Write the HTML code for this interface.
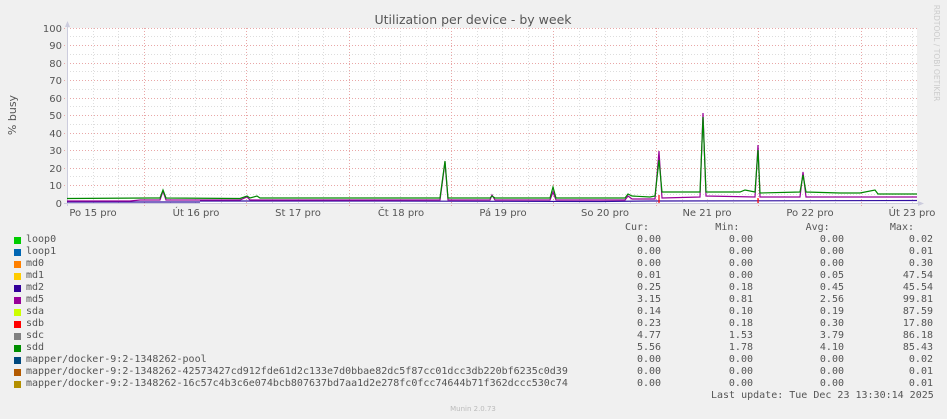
<!DOCTYPE html>
<html><head><meta charset="utf-8"><style>
html,body{margin:0;padding:0;background:#f0f0f0;}
body{width:947px;height:419px;position:relative;overflow:hidden;font-family:"DejaVu Sans","Liberation Sans",sans-serif;}
.t{position:absolute;white-space:pre;}
.m{font-family:"DejaVu Sans Mono","Liberation Mono",monospace;font-size:10px;color:#555;line-height:12px;}
.sw{position:absolute;width:7px;height:7px;left:14px;}
</style></head><body>
<svg width="947" height="419" style="position:absolute;left:0;top:0">
<rect x="67" y="28" width="850" height="175" fill="#fff"/>
<g stroke="#ddd" stroke-width="1" stroke-dasharray="1,2">
<line x1="67" x2="917" y1="36.5" y2="36.5"/><line x1="67" x2="917" y1="54.5" y2="54.5"/><line x1="67" x2="917" y1="71.5" y2="71.5"/><line x1="67" x2="917" y1="89.5" y2="89.5"/><line x1="67" x2="917" y1="106.5" y2="106.5"/><line x1="67" x2="917" y1="124.5" y2="124.5"/><line x1="67" x2="917" y1="141.5" y2="141.5"/><line x1="67" x2="917" y1="159.5" y2="159.5"/><line x1="67" x2="917" y1="176.5" y2="176.5"/><line x1="67" x2="917" y1="194.5" y2="194.5"/>
<line y1="28" y2="203" x1="93.5" x2="93.5"/><line y1="28" y2="203" x1="118.5" x2="118.5"/><line y1="28" y2="203" x1="170.5" x2="170.5"/><line y1="28" y2="203" x1="195.5" x2="195.5"/><line y1="28" y2="203" x1="221.5" x2="221.5"/><line y1="28" y2="203" x1="272.5" x2="272.5"/><line y1="28" y2="203" x1="298.5" x2="298.5"/><line y1="28" y2="203" x1="323.5" x2="323.5"/><line y1="28" y2="203" x1="374.5" x2="374.5"/><line y1="28" y2="203" x1="400.5" x2="400.5"/><line y1="28" y2="203" x1="426.5" x2="426.5"/><line y1="28" y2="203" x1="477.5" x2="477.5"/><line y1="28" y2="203" x1="502.5" x2="502.5"/><line y1="28" y2="203" x1="528.5" x2="528.5"/><line y1="28" y2="203" x1="579.5" x2="579.5"/><line y1="28" y2="203" x1="605.5" x2="605.5"/><line y1="28" y2="203" x1="630.5" x2="630.5"/><line y1="28" y2="203" x1="682.5" x2="682.5"/><line y1="28" y2="203" x1="707.5" x2="707.5"/><line y1="28" y2="203" x1="733.5" x2="733.5"/><line y1="28" y2="203" x1="784.5" x2="784.5"/><line y1="28" y2="203" x1="810.5" x2="810.5"/><line y1="28" y2="203" x1="835.5" x2="835.5"/><line y1="28" y2="203" x1="886.5" x2="886.5"/><line y1="28" y2="203" x1="912.5" x2="912.5"/>
</g>
<g stroke="#e9a7a7" stroke-width="1" stroke-dasharray="1,2">
<line x1="64" x2="917" y1="28.5" y2="28.5"/><line x1="64" x2="917" y1="45.5" y2="45.5"/><line x1="64" x2="917" y1="63.5" y2="63.5"/><line x1="64" x2="917" y1="80.5" y2="80.5"/><line x1="64" x2="917" y1="98.5" y2="98.5"/><line x1="64" x2="917" y1="115.5" y2="115.5"/><line x1="64" x2="917" y1="133.5" y2="133.5"/><line x1="64" x2="917" y1="150.5" y2="150.5"/><line x1="64" x2="917" y1="168.5" y2="168.5"/><line x1="64" x2="917" y1="185.5" y2="185.5"/>
<line y1="28" y2="206" x1="144.5" x2="144.5"/><line y1="28" y2="206" x1="246.5" x2="246.5"/><line y1="28" y2="206" x1="349.5" x2="349.5"/><line y1="28" y2="206" x1="451.5" x2="451.5"/><line y1="28" y2="206" x1="553.5" x2="553.5"/><line y1="28" y2="206" x1="656.5" x2="656.5"/><line y1="28" y2="206" x1="758.5" x2="758.5"/><line y1="28" y2="206" x1="861.5" x2="861.5"/>
</g>
<line x1="67.5" y1="22" x2="67.5" y2="206" stroke="#ccd" stroke-width="1"/>
<polygon points="65,27 67.5,21 70,27" fill="#ccd"/>
<line x1="64" y1="203.5" x2="922" y2="203.5" stroke="#ccd"/>
<polygon points="918,201 924,203.5 918,206" fill="#ccd"/>
<g fill="none" stroke-width="1.2">
<path stroke="#3010a0" d="M67 202 L200 202 M200 201 L340 201 L600 201.5 L650 201 L917 200.5"/>
<path stroke="#990099" d="M67 201 L130 201 L140 200 L160 200 L163 191 L166 200 L240 200 L247 197 L250 200 L440 200 L445 162 L448 200 L490 200 L492 195 L495 200 L550 200 L553 192 L556 200 L625 200 L628 196 L632 199 L655 199 L659 151 L662 198 L700 197 L703 113 L706 196 L755 197 L758 145 L760 197 L800 197 L803 172 L806 197 L917 197"/>
<path stroke="#008800" d="M67 198.5 L150 198 L160 198 L163 190 L166 198 L240 198.5 L247 196 L250 198 L257 196 L260 198 L440 198 L445 161 L448 198 L490 198 L492 196 L495 198 L550 198 L553 187 L556 198 L625 198 L628 194 L632 196 L650 197 L655 196 L659 160 L662 192 L700 192 L703 117 L706 192 L740 192 L745 190 L755 192 L758 150 L760 193 L800 192 L803 175 L806 192 L840 193 L860 193 L875 190 L878 194 L917 194"/>
<path stroke="#ff0000" d="M659 203 L659 195 M758 203 L758 198"/>
</g>
<g font-family="DejaVu Sans,Liberation Sans,sans-serif" font-size="10" fill="#555" text-anchor="end">
<text x="62" y="32">100</text><text x="62" y="49">90</text><text x="62" y="67">80</text><text x="62" y="84">70</text><text x="62" y="102">60</text><text x="62" y="119">50</text><text x="62" y="137">40</text><text x="62" y="154">30</text><text x="62" y="172">20</text><text x="62" y="189">10</text><text x="62" y="207">0</text>
</g>
<g font-family="DejaVu Sans,Liberation Sans,sans-serif" font-size="10" fill="#555" text-anchor="middle">
<text x="93" y="216">Po 15 pro</text><text x="196" y="216">Út 16 pro</text><text x="298" y="216">St 17 pro</text><text x="401" y="216">Čt 18 pro</text><text x="503" y="216">Pá 19 pro</text><text x="605" y="216">So 20 pro</text><text x="707" y="216">Ne 21 pro</text><text x="810" y="216">Po 22 pro</text><text x="912" y="216">Út 23 pro</text>
</g>
<text x="473" y="24" font-family="DejaVu Sans,Liberation Sans,sans-serif" font-size="12.5" fill="#555" text-anchor="middle">Utilization per device - by week</text>
<text transform="translate(16,115) rotate(-90)" font-family="DejaVu Sans,Liberation Sans,sans-serif" font-size="11" fill="#555" text-anchor="middle">% busy</text>
<text transform="translate(934,53) rotate(90)" font-family="DejaVu Sans,Liberation Sans,sans-serif" font-size="7.5" fill="#ccc" text-anchor="middle">RRDTOOL / TOBI OETIKER</text>
<text x="473" y="411" font-family="DejaVu Sans,Liberation Sans,sans-serif" font-size="7" fill="#bbb" text-anchor="middle">Munin 2.0.73</text>
</svg>
<div class="t m" style="left:625px;top:222px">Cur:           Min:           Avg:          Max:</div>
<div class="sw" style="top:237px;background:#00cc00"></div>
<div class="sw" style="top:249px;background:#0066b3"></div>
<div class="sw" style="top:261px;background:#ff8000"></div>
<div class="sw" style="top:273px;background:#ffcc00"></div>
<div class="sw" style="top:285px;background:#330099"></div>
<div class="sw" style="top:297px;background:#990099"></div>
<div class="sw" style="top:309px;background:#ccff00"></div>
<div class="sw" style="top:321px;background:#ff0000"></div>
<div class="sw" style="top:333px;background:#808080"></div>
<div class="sw" style="top:345px;background:#008f00"></div>
<div class="sw" style="top:357px;background:#00487d"></div>
<div class="sw" style="top:369px;background:#b35a00"></div>
<div class="sw" style="top:381px;background:#b38f00"></div>
<div class="t m" style="left:26px;top:234px">loop0
loop1
md0
md1
md2
md5
sda
sdb
sdc
sdd
mapper/docker-9:2-1348262-pool
mapper/docker-9:2-1348262-42573427cd912fde61d2c133e7d0bbae82dc5f87cc01dcc3db220bf6235c0d39
mapper/docker-9:2-1348262-16c57c4b3c6e074bcb807637bd7aa1d2e278fc0fcc74644b71f362dccc530c74</div>
<div class="t m" style="left:637px;top:234px;text-align:right;width:24px">0.00
0.00
0.00
0.01
0.25
3.15
0.14
0.23
4.77
5.56
0.00
0.00
0.00</div>
<div class="t m" style="left:719px;top:234px;text-align:right;width:34px">0.00
0.00
0.00
0.00
0.18
0.81
0.10
0.18
1.53
1.78
0.00
0.00
0.00</div>
<div class="t m" style="left:810px;top:234px;text-align:right;width:34px">0.00
0.00
0.00
0.05
0.45
2.56
0.19
0.30
3.79
4.10
0.00
0.00
0.00</div>
<div class="t m" style="left:890px;top:234px;text-align:right;width:43px">0.02
0.01
0.30
47.54
45.54
99.81
87.59
17.80
86.18
85.43
0.02
0.01
0.01</div>
<div class="t m" style="left:711px;top:390px">Last update: Tue Dec 23 13:30:14 2025</div>
</body></html>
